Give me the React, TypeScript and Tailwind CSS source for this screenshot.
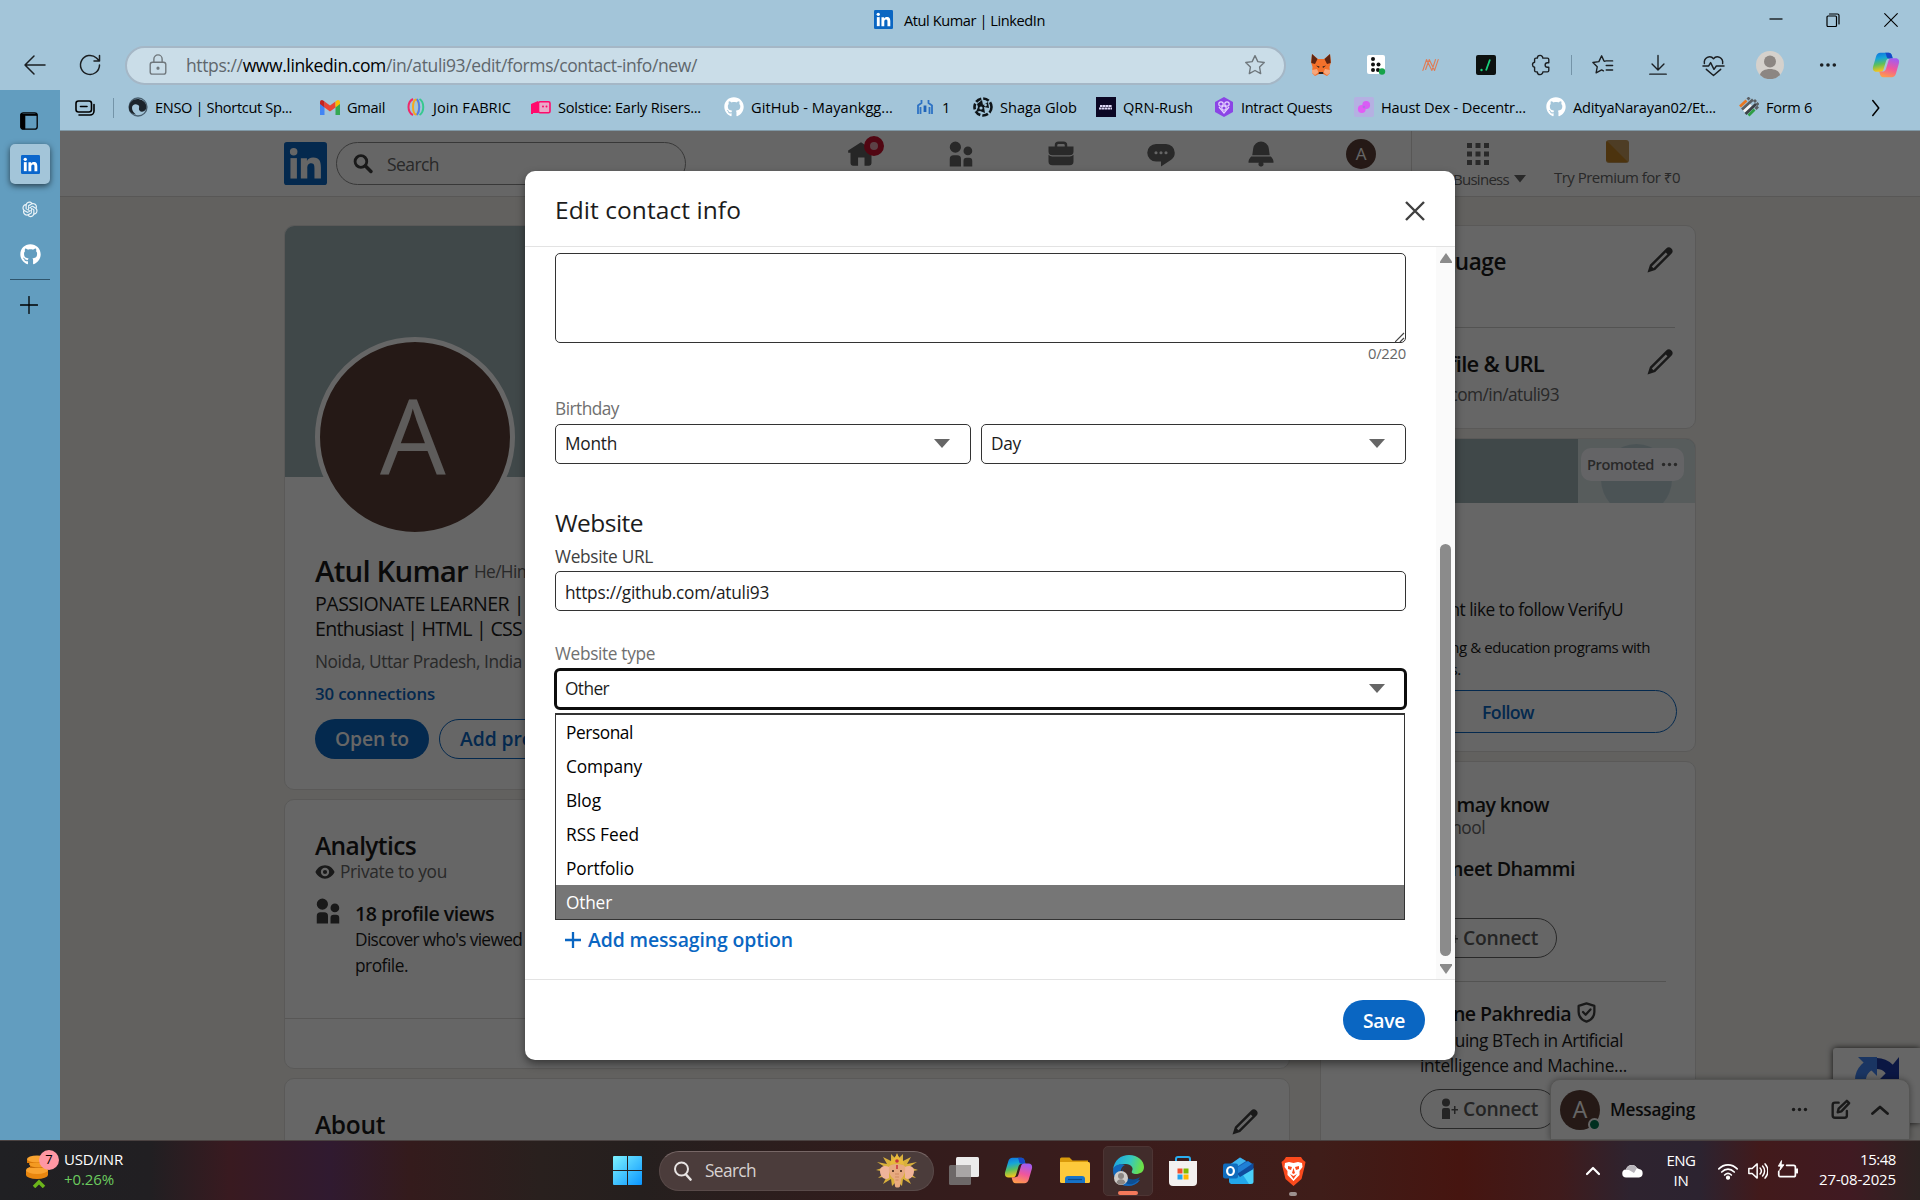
import React, { useLayoutEffect, useRef, useState } from "react";
import { FaGithub } from "react-icons/fa";
import { AiOutlineOpenAI } from "react-icons/ai";

type Kids = { children?: React.ReactNode; className?: string };

/* Text set to a given measure: tracking is computed from the rendered width. */
function T({ w, children, className = "" }: Kids & { w?: number }) {
  const ref = useRef<HTMLSpanElement>(null);
  const [ls, setLs] = useState(0);
  useLayoutEffect(() => {
    const el = ref.current;
    if (!el || !w) return;
    const n = (el.textContent || "").length;
    setLs((w - el.getBoundingClientRect().width) / n);
  }, [w]);
  return (
    <span ref={ref} className={`inline-block shrink-0 whitespace-nowrap ${className}`} style={ls ? { letterSpacing: ls } : undefined}>
      {children}
    </span>
  );
}

const Svg = ({ s = 24, vb = "0 0 24 24", className = "", children }: Kids & { s?: number; vb?: string }) => (
  <svg width={s} height={s} viewBox={vb} className={`shrink-0 ${className}`} fill="none" stroke="currentColor" strokeWidth="1.5" strokeLinecap="round" strokeLinejoin="round">
    {children}
  </svg>
);

const InLogo = ({ s, bg = "#0a66c2" }: { s: number; bg?: string }) => (
  <svg width={s} height={s} viewBox="0 0 24 24" className="shrink-0">
    <rect width="24" height="24" rx="1.6" fill={bg} />
    <g fill="#fff">
      <circle cx="5.4" cy="5.5" r="2.1" />
      <rect x="3.6" y="9" width="3.6" height="11.4" />
      <path d="M9.4 9h3.4v1.6c.5-1 1.700-1.900 3.500-1.900 3.600 0 4.300 2.400 4.300 5.500v6.200H17v-5.500c0-1.300 0-3-1.800-3s-2.200 1.400-2.200 2.900v5.600H9.400z" />
    </g>
  </svg>
);

const Pencil = () => (
  <svg width="30" height="30" viewBox="0 0 24 24" fill="#404040" className="shrink-0">
    <path d="M21.130 2.860a3 3 0 0 0-4.170 0l-13 13L2 22l6.190-2L21.130 7a3 3 0 0 0 0-4.160zM6.770 18.570l-1.350-1.350L16.640 6 18 7.350z" />
  </svg>
);

const People = ({ s }: { s: number }) => (
  <svg width={s} height={s} viewBox="0 0 24 24" fill="currentColor" className="shrink-0">
    <path d="M12 16v6H3v-6a3 3 0 0 1 3-3h3a3 3 0 0 1 3 3zm5.500-3A3.500 3.500 0 1 0 14 9.500a3.500 3.500 0 0 0 3.500 3.500zm1 2h-2a2.500 2.500 0 0 0-2.500 2.500V22h7v-4.500a2.500 2.500 0 0 0-2.500-2.500zM7.500 2A4.500 4.500 0 1 0 12 6.500 4.490 4.490 0 0 0 7.500 2z" />
  </svg>
);

const Copilot = ({ s }: { s: number }) => (
  <svg width={s} height={s} viewBox="0 0 32 32" className="shrink-0">
    <defs>
      <linearGradient id="cpa" x1="0" y1="0" x2="0.2" y2="1">
        <stop offset="0" stopColor="#0f6fe0" />
        <stop offset=".35" stopColor="#16a5d8" />
        <stop offset=".65" stopColor="#5ebf5b" />
        <stop offset="1" stopColor="#f5c51c" />
      </linearGradient>
      <linearGradient id="cpb" x1=".6" y1="0" x2=".3" y2="1">
        <stop offset="0" stopColor="#a35cf0" />
        <stop offset=".5" stopColor="#f0569c" />
        <stop offset="1" stopColor="#ff9c4a" />
      </linearGradient>
    </defs>
    <path d="M9.500 2h9.500c2.500 0 3.300 1.500 4 4l.7 2.500h-4c-2 0-3 1-3.700 3.200l-2.700 9c-.6 2-1.600 3-3.600 3H5c-3.500 0-4.600-2.600-3.700-6L4.700 6c.8-2.600 2.300-4 4.800-4z" fill="url(#cpa)" />
    <path d="M15 2h4c2.500 0 3.300 1.500 4 4l.7 2.500h-4.500c-1.600 0-2.200-1-2.600-2.500C16.200 4.300 16 2.600 15 2z" fill="#1549c8" />
    <path d="M22.500 30H13c-2.500 0-3.300-1.500-4-4l-.7-2.500h4c2 0 3-1 3.700-3.200l2.700-9c.6-2 1.600-3 3.600-3H27c3.500 0 4.600 2.600 3.700 6L27.300 26c-.8 2.600-2.300 4-4.800 4z" fill="url(#cpb)" />
  </svg>
);

const Dots = ({ s = 20 }: { s?: number }) => (
  <svg width={s} height={s} viewBox="0 0 20 20" fill="currentColor" className="shrink-0">
    <circle cx="3" cy="10" r="2" /><circle cx="10" cy="10" r="2" /><circle cx="17" cy="10" r="2" />
  </svg>
);

const Caret = ({ className = "" }: { className?: string }) => (
  <svg width="16" height="9" viewBox="0 0 16 9" fill="currentColor" className={className}><path d="M0 0h16L8 9z" /></svg>
);

const Cell = ({ className = "", children }: Kids) => <div className={`flex shrink-0 items-center justify-center ${className}`}>{children}</div>;

/* ---------- browser chrome ---------- */

function TitleBar() {
  return (
    <div className="flex h-10 shrink-0 items-center text-black">
      <div className="flex w-[1747px] items-center gap-[11px] pl-[874px]">
        <InLogo s={19} />
        <T w={141} className="mt-px text-[14.600px]">Atul Kumar | LinkedIn</T>
      </div>
      <Cell className="w-[57px]"><Svg s={14} vb="0 0 14 14"><path d="M.5 6h13" strokeLinecap="butt" strokeWidth="1.200" /></Svg></Cell>
      <Cell className="w-[58px]"><Svg s={14} vb="0 0 14 14"><path d="M1 4a1 1 0 0 1 1-1h7.500a1 1 0 0 1 1 1v8.500a1 1 0 0 1-1 1H2a1 1 0 0 1-1-1zM3.500 1h8a1.500 1.500 0 0 1 1.500 1.500V11" strokeWidth="1.200" /></Svg></Cell>
      <Cell className="w-[58px]"><Svg s={14} vb="0 0 14 14"><path d="M.7.7l12.600 12.600M13.300.7L.7 13.300" strokeWidth="1.100" /></Svg></Cell>
    </div>
  );
}

function Toolbar() {
  return (
    <div className="flex h-[50px] shrink-0 items-center text-[#1b1f22]">
      <Cell className="w-[69px]"><Svg s={24}><path d="M22 12H2.500M11 3l-9 9 9 9" /></Svg></Cell>
      <Cell className="w-[42px]"><Svg s={24}><path d="M21.500 12A9.500 9.500 0 1 1 18.500 5L21 7.500M21.500 2.500V8H16" /></Svg></Cell>
      <div className="ml-[14px] flex h-[39px] w-[1161px] items-center rounded-full border-2 border-[#a5b7c6] bg-[#cadde8]">
        <div className="ml-[20px] flex w-[39px] items-center text-[#6f777c]">
          <Svg s={22}><rect x="3.500" y="9" width="17" height="13" rx="2.500" /><path d="M7.500 9V5.500a4.500 4.500 0 0 1 9 0V9" /><circle cx="12" cy="15.500" r="1" fill="currentColor" /></Svg>
        </div>
        <T w={511} className="text-[17.500px] text-[#5f676d]">https://<span className="text-black">www.linkedin.com</span>/in/atuli93/edit/forms/contact-info/new/</T>
        <div className="mr-[18px] ml-auto text-[#6f777c]">
          <Svg s={22}><path d="M12 1.800l3.100 6.500 7 1-5.100 5 1.200 7.100L12 18l-6.200 3.400L7 14.300l-5.100-5 7-1z" /></Svg>
        </div>
      </div>
      <Cell className="ml-[7px] w-[55px]">
        <svg width="20" height="22" viewBox="0 0 20 22">
          <path d="M1 0l6 5h6l6-5 1 8-1.500 5 .5 6-3 3-4-2H8l-4 2-3-3 .5-6L0 8z" fill="#f4712b" />
          <path d="M1 0l5.500 5L4 10 .3 9zM19 0l-5.500 5L16 10l3.700-1z" fill="#5e2512" />
          <path d="M1 16l5-1 1.500 3.500L4 21l-3-2zM19 16l-5-1-1.500 3.500L16 21l3-2z" fill="#f6a67b" />
          <path d="M5 11.500l3.500 1-.5 1.500zM15 11.500l-3.500 1 .5 1.500zM8 18h4l.5 2h-5z" fill="#30211b" />
        </svg>
      </Cell>
      <Cell className="w-[55px]">
        <svg width="20" height="20" viewBox="0 0 20 20">
          <rect x="1" width="18" height="19" rx="2" fill="#fff" />
          <g fill="#111"><circle cx="7" cy="4" r="2" /><circle cx="7" cy="9.500" r="2" /><circle cx="12.500" cy="9.500" r="2" /><circle cx="7" cy="15" r="2" /><circle cx="12" cy="15" r="2" /></g>
          <circle cx="16" cy="16.500" r="3.200" fill="#16a34a" />
        </svg>
      </Cell>
      <Cell className="w-[55px]"><Svg s={18} vb="0 0 20 20" className="text-[#de7d58]"><path d="M1 16L5 4l6 12 4-12M4 15L8 4l6 12 4-12" strokeWidth="1.300" /></Svg></Cell>
      <Cell className="w-[55px]">
        <svg width="20" height="20" viewBox="0 0 20 20"><rect width="20" height="20" rx="2" fill="#0c1110" /><path d="M14 4.500l-4 11" stroke="#19d37c" strokeWidth="1.800" /><circle cx="5.500" cy="15" r="1.200" fill="#19d37c" /></svg>
      </Cell>
      <Cell className="w-[55px]">
        <Svg s={22}><path d="M8 4.500a3 3 0 0 1 6 0h5a1.500 1.500 0 0 1 1.500 1.500v3.500H19a2.500 2.500 0 0 0 0 5h1.500V18a1.500 1.500 0 0 1-1.500 1.500h-5a3 3 0 0 1-6 0H6.500A1.500 1.500 0 0 1 5 18v-3.500a2.800 2.800 0 0 1 0-5.500V6a1.500 1.500 0 0 1 1.500-1.500z" /></Svg>
      </Cell>
      <div className="ml-[3px] h-5 w-px bg-[#7494a8]" />
      <Cell className="ml-[3px] w-[55px]">
        <Svg s={22}><path d="M15 7.500h7.500M15.500 12.500h7M15.500 17.500h7M13 7.500L10.500 2 7.500 8.300l-6.500 1L5.700 14l-1.200 6.500 6-3.200 2 1.100M13 7.500l1 .5" /></Svg>
      </Cell>
      <Cell className="w-[55px]"><Svg s={22}><path d="M12 1.500V17M5.500 11l6.500 6.500 6.500-6.500M3 22h18" /></Svg></Cell>
      <Cell className="w-[56px]">
        <Svg s={23}><path d="M2.500 10C1.500 4 8.500.5 12 5c3.500-4.500 10.500-1 9.500 5M1 12.500h6l2-3.500 3.500 7L15 12.500h8M4.500 16l7.500 6.500 7.500-6.500" /></Svg>
      </Cell>
      <Cell className="w-[58px]">
        <svg width="28" height="28" viewBox="0 0 28 28"><circle cx="14" cy="14" r="14" fill="#d5d1cc" /><circle cx="14" cy="10.500" r="6" fill="#8c8682" /><path d="M4 24c1-8 19-8 20 0a14 14 0 0 1-20 0z" fill="#8c8682" /></svg>
      </Cell>
      <Cell className="w-[57px]"><Dots s={18} /></Cell>
      <Cell className="w-[59px]"><Copilot s={28} /></Cell>
    </div>
  );
}

const Marks: Record<string, React.ReactNode> = {
  enso: <svg width="20" height="20" viewBox="0 0 20 20"><circle cx="10" cy="10" r="9" fill="none" stroke="#4a6070" strokeWidth="1.300" /><path d="M1 11C1 4 7 1 12 2.500c5 1 7.500 6 6 9.500-1.500 3-5 3.500-6.500 1.500s1-4-1.500-5.500S4 7.500 4 11c0 3 2 5 4 6.500C4 17 1 15 1 11z" fill="#1c242b" /></svg>,
  gmail: <svg width="20" height="15" viewBox="0 0 20 15"><path d="M0 2v13h4.500V6z" fill="#4285f4" /><path d="M20 2v13h-4.500V6z" fill="#34a853" /><path d="M4.500 1.500v6L10 11.500l5.500-4v-6L10 5.500z" fill="#ea4335" /><path d="M0 2.200C0 .2 2-.5 3.500.7l1 .8v6L0 4z" fill="#c5221f" /><path d="M20 2.200c0-2-2-2.700-3.500-1.500l-1 .8v6L20 4z" fill="#fbbc04" /></svg>,
  fabric: <svg width="18" height="18" viewBox="0 0 18 18" fill="none" strokeWidth="2"><path d="M6 1C0 4 0 14 6 17" stroke="#f0286a" /><ellipse cx="9" cy="9" rx="3" ry="7.500" stroke="#f6a81c" /><path d="M10 1c3 4 3 12 0 16" stroke="#4a7df0" /><path d="M12.500 1c5 3 5 13 0 16" stroke="#36c98f" /></svg>,
  solstice: <svg width="20" height="15" viewBox="0 0 20 15"><path d="M0 4l7-3v12H2v1H0z" fill="#ff0a6c" /><rect x="7.500" y="1.800" width="11.500" height="11" rx="1.500" fill="#e9a9c8" stroke="#ff0a6c" strokeWidth="1.600" /><circle cx="12" cy="6.500" r="1" fill="#ff0a6c" /><circle cx="15.500" cy="6.500" r="1" fill="#ff0a6c" /></svg>,
  github: <FaGithub size={20} color="#fff" />,
  one: <svg width="18" height="16" viewBox="0 0 18 16" fill="none" stroke="#2d72c4" strokeWidth="2.200"><path d="M2 15V6.500L5.500 4V1M16 15V6.500L12.500 4V1M4.500 15V8M13.500 15V8" strokeWidth="1.800" /><path d="M9 6.500v6.500" stroke="#1f63b8" strokeWidth="2.800" /></svg>,
  shaga: <svg width="20" height="20" viewBox="0 0 20 20"><circle cx="10" cy="10" r="8.500" fill="none" stroke="#0e1418" strokeWidth="2.600" strokeDasharray="6 2" /><path d="M4 7l5-4 1 5 5-3 1 6-5-1 1 6-5-2-4 1 2-5z" fill="#0e1418" /><circle cx="8" cy="11" r="1.600" fill="#a3c5d9" /><circle cx="12.500" cy="8" r="1.400" fill="#a3c5d9" /></svg>,
  qrn: <svg width="20" height="20" viewBox="0 0 20 20"><path fill="#0b0724" d="M0 0h20v20H0z" /><path d="M4 9h12M3 11.500h13" stroke="#ddd8f5" strokeWidth="2" strokeDasharray="2.500 .4" /></svg>,
  intract: <svg width="20" height="20" viewBox="0 0 20 20"><path d="M10 0l9 5v10l-9 5-9-5V5z" fill="#8b45e6" /><g fill="none" stroke="#e6d3ff" strokeWidth="1.200"><circle cx="7" cy="7" r="2.200" /><circle cx="13" cy="7" r="2.200" /><circle cx="10" cy="11" r="2.200" /><path d="M5 10l5 6 5-6" /></g></svg>,
  haust: <svg width="20" height="20" viewBox="0 0 20 20"><rect width="20" height="20" rx="2" fill="#b5b0e2" /><circle cx="7.800" cy="12" r="3.900" fill="#e25cf5" /><circle cx="12.200" cy="8" r="3.900" fill="#d95cf5" /><circle cx="10" cy="10" r="1.300" fill="#b070e0" /></svg>,
  form: <svg width="20" height="20" viewBox="0 0 20 20" strokeWidth="2.800"><path d="M1 9.500l6.500-6" stroke="#e87722" /><path d="M8.500 2.500l2-2M15 5l2-2M17.500 8l2-2" stroke="#5a5f63" /><path d="M3 12.500L14 2.500" stroke="#5a5f63" /><path d="M5 14.500l7-6.500" stroke="#f2f2f2" /><path d="M6.500 17L17 7" stroke="#3c4147" /><path d="M9.500 18.500l6-6" stroke="#2f9e44" /><path d="M16.500 12l2.500-2.500" stroke="#5a5f63" /></svg>,
};

const bookmarks = [
  { icon: "enso", label: "ENSO | Shortcut Sp...", tw: 137, cell: "w-[192px]" },
  { icon: "gmail", label: "Gmail", tw: 38, cell: "w-[86px]" },
  { icon: "fabric", label: "Join FABRIC", tw: 78, cell: "w-[125px]" },
  { icon: "solstice", label: "Solstice: Early Risers...", tw: 143, cell: "w-[193px]" },
  { icon: "github", label: "GitHub - Mayankgg...", tw: 142, cell: "w-[191px]" },
  { icon: "one", label: "1", tw: 8, cell: "w-[58px]" },
  { icon: "shaga", label: "Shaga Glob", tw: 77, cell: "w-[123px]" },
  { icon: "qrn", label: "QRN-Rush", tw: 70, cell: "w-[118px]" },
  { icon: "intract", label: "Intract Quests", tw: 91, cell: "w-[140px]" },
  { icon: "haust", label: "Haust Dex - Decentr...", tw: 145, cell: "w-[192px]" },
  { icon: "github", label: "AdityaNarayan02/Et...", tw: 143, cell: "w-[193px]" },
  { icon: "form", label: "Form 6", tw: 46, cell: "w-[127px]" },
];

function Bookmarks() {
  return (
    <div className="flex h-10 shrink-0 items-center bg-[#a3c5d9] pb-[5px] text-[14.600px] text-black">
      <Cell className="w-[50px]"><Svg s={20} vb="0 0 20 20"><rect x="1" y="3" width="15.500" height="11" rx="2.500" strokeWidth="1.600" /><path d="M5.500 8.500H12M4 17h11a4 4 0 0 0 4-4V6.500" strokeWidth="1.600" /></Svg></Cell>
      <div className="mr-[14px] ml-[3px] h-5 w-px bg-[#7494a8]" />
      {bookmarks.map((b) => (
        <div key={b.label} className={`flex shrink-0 items-center gap-[7px] ${b.cell}`}>
          <Cell className="w-5">{Marks[b.icon]}</Cell>
          <T w={b.tw}>{b.label}</T>
        </div>
      ))}
      <Svg s={18}><path d="M9 2l8 10-8 10" strokeWidth="2" /></Svg>
    </div>
  );
}

function VerticalTabs() {
  return (
    <div className="flex w-[60px] shrink-0 flex-col items-center bg-[#629dbf] text-black">
      <Cell className="mt-[21px] h-5 pr-[2px]">
        <Svg s={18} vb="0 0 18 18"><rect x=".8" y=".8" width="16.400" height="16.400" rx="2.500" strokeWidth="1.300" /><path d="M1 2h16v1.500H5V17H2.500L1 15.500z" fill="currentColor" strokeWidth=".6" /></Svg>
      </Cell>
      <div className="mt-[13px] flex h-10 w-10 items-center justify-center rounded-[5px] bg-[#a3c5d9] shadow-[0_2px_6px_rgba(0,0,0,0.6)]"><InLogo s={19} bg="#0a66cc" /></div>
      <Cell className="mt-[15px] h-5"><AiOutlineOpenAI size={20} color="#e9f2f7" /></Cell>
      <Cell className="mt-[25px] h-5"><FaGithub size={21} color="#fff" /></Cell>
      <div className="mt-[15px] h-px w-10 bg-[#2f556c]" />
      <Cell className="mt-[15px] h-[19px] pr-[2px]"><Svg s={18} vb="0 0 18 18"><path d="M9 .5v17M.5 9h17" strokeWidth="1.300" /></Svg></Cell>
    </div>
  );
}

/* ---------- profile page ---------- */

const navIcons = [
  <svg key="h" width="28" height="28" viewBox="0 0 24 24"><path d="M23 9v2h-2v9a2 2 0 0 1-2 2h-4v-7H9.500v7H5a2 2 0 0 1-2-2v-9H1V9l11-7z" fill="#5f5f5f" /></svg>,
  <People key="p" s={30} />,
  <svg key="b" width="30" height="30" viewBox="0 0 24 24" fill="currentColor"><path d="M17 6V5a3 3 0 0 0-3-3h-4a3 3 0 0 0-3 3v1H2v4a3 3 0 0 0 3 3h14a3 3 0 0 0 3-3V6zM9 5a1 1 0 0 1 1-1h4a1 1 0 0 1 1 1v1H9zm10 9a4 4 0 0 0 3-1.380V18a3 3 0 0 1-3 3H5a3 3 0 0 1-3-3v-5.380A4 4 0 0 0 5 14z" /></svg>,
  <svg key="m" width="30" height="30" viewBox="0 0 24 24" fill="currentColor"><path d="M16 4H8a7 7 0 0 0 0 14h4v4l8.160-5.390A6.780 6.780 0 0 0 23 11a7 7 0 0 0-7-7zm-8 8.250A1.250 1.250 0 1 1 9.250 11 1.250 1.250 0 0 1 8 12.250zm4 0A1.250 1.250 0 1 1 13.250 11 1.250 1.250 0 0 1 12 12.250zm4 0A1.250 1.250 0 1 1 17.250 11 1.250 1.250 0 0 1 16 12.250z" /></svg>,
  <svg key="n" width="30" height="30" viewBox="0 0 24 24" fill="currentColor"><path d="M22 19h-8.280a2 2 0 1 1-3.440 0H2v-1a4.520 4.520 0 0 1 1.170-2.830l1-1.170h15.700l1 1.170A4.420 4.420 0 0 1 22 18zM18.210 7.440A6.270 6.270 0 0 0 12 2a6.270 6.270 0 0 0-6.210 5.440L5 13h14z" /></svg>,
];

function NavBar() {
  return (
    <div className="flex h-[66px] shrink-0 border-b border-[#dcdad6] bg-white pl-56 text-[#666]">
      <div className="mt-[11px] h-[43px]"><InLogo s={43} /></div>
      <div className="mt-[11px] ml-[9px] flex h-[43px] w-[350px] items-center rounded-full border border-[#8c8c8c] pl-[16px]">
        <Svg s={20} className="text-[#404040]"><circle cx="9.500" cy="9" r="7" strokeWidth="3.400" /><path d="M15 14.500l6.500 6.500" strokeWidth="4.200" /></Svg>
        <T w={52} className="mt-px ml-[14px] text-[17.500px]">Search</T>
      </div>
      <div className="ml-[125px] flex">
        {navIcons.map((ic, i) => (
          <div key={i} className="relative flex h-[45px] w-[100px] items-center justify-center">
            {ic}
            {i === 0 && <div className="absolute top-[5px] left-[53px] h-5 w-5 rounded-full border-[6px] border-[#cb112d] bg-[#e6a5ae]" />}
          </div>
        ))}
        <Cell className="h-[45px] w-[100px]"><Cell className="h-[30px] w-[30px] rounded-full bg-[#5d4037] text-[17px] text-white">A</Cell></Cell>
      </div>
      <div className="flex w-[134px] flex-col items-center border-l border-[#dcdad6] pt-[11px] pr-[2px]">
        <svg width="24" height="24" viewBox="0 0 24 24" fill="currentColor"><path d="M1 1h5v5H1zM9.500 1h5v5h-5zM18 1h5v5h-5zM1 9.500h5v5H1zM9.500 9.500h5v5h-5zM18 9.500h5v5h-5zM1 18h5v5H1zM9.500 18h5v5h-5zM18 18h5v5h-5z" /></svg>
        <div className="mt-[3px] flex items-center gap-[5px] text-[15px] leading-5">
          <T w={80}>For Business</T>
          <svg width="12" height="8" viewBox="0 0 12 8" fill="currentColor"><path d="M0 0h12L6 7.500z" /></svg>
        </div>
      </div>
      <div className="flex w-[144px] flex-col items-center pt-[9px]">
        <svg width="23" height="23" viewBox="0 0 23 23"><rect width="23" height="23" rx="3" fill="#c39a5c" /><path d="M1 1l21 21H3a3 3 0 0 1-3-3V3a3 3 0 0 1 1-2z" fill="#bd8023" /></svg>
        <T w={126} className="mt-[4px] text-[15px] leading-5">Try Premium for ₹0</T>
      </div>
    </div>
  );
}

const Card = ({ className = "", children }: Kids) => <div className={`overflow-hidden rounded-[10px] border border-[#e0dfdc] bg-white ${className}`}>{children}</div>;

function LeftColumn() {
  return (
    <div className="flex w-[1006px] shrink-0 flex-col gap-[9px] text-[#1a1a1a]">
      <Card className="h-[565px] shrink-0">
        <div className="h-[251px] bg-[#a0b4b7]" />
        <div className="-mt-[140px] pl-[30px]">
          <Cell className="relative h-[200px] w-[200px] rounded-full border-[5px] border-white bg-[#5d4037] pr-1 pb-1 text-[104px] font-medium text-[#eae6e4]">A</Cell>
          <div className="mt-[14px] flex h-10 items-center gap-[6px]">
            <T w={153} className="text-[29.500px] font-semibold">Atul Kumar</T>
            <T w={58} className="mt-[1px] text-[17.300px] text-[#666]">He/Him</T>
          </div>
          <div className="flex flex-col items-start text-[19.600px] leading-[25px]">
            <div className="flex gap-[14px]"><T w={209}>PASSIONATE LEARNER |</T><T>Web</T></div>
            <div className="flex gap-[14px]"><T w={207}>Enthusiast | HTML | CSS</T><T>|</T></div>
          </div>
          <div className="mt-[8px] flex h-[25px] items-center"><T w={207} className="text-[17.300px] text-[#666]">Noida, Uttar Pradesh, India</T></div>
          <div className="mt-[7px] flex h-[25px] items-center"><T w={120} className="text-[16.800px] font-semibold text-[#0a66c2]">30 connections</T></div>
          <div className="mt-[13px] flex gap-[10px] text-[19.300px] font-semibold">
            <Cell className="h-10 w-[114px] rounded-full bg-[#0a66c2] pt-px text-white"><T w={74}>Open to</T></Cell>
            <div className="flex h-10 w-[215px] items-center rounded-full border border-[#0a66c2] pt-px pl-5 text-[#0a66c2]"><T w={174}>Add profile section</T></div>
          </div>
        </div>
      </Card>
      <Card className="h-[270px] shrink-0">
        <div className="h-[219px] border-b border-[#dcdad6] pt-[33px] pl-[30px]">
          <div className="flex h-[26px] items-center"><T w={101} className="text-[24.500px] font-semibold">Analytics</T></div>
          <div className="flex h-[26px] items-center gap-[5px] text-[#404040]">
            <svg width="20" height="20" viewBox="0 0 24 24" fill="currentColor"><path d="M12 4C7 4 2.700 7.300.5 12 2.700 16.700 7 20 12 20s9.300-3.300 11.500-8C21.300 7.300 17 4 12 4zm0 13a5 5 0 1 1 0-10 5 5 0 0 1 0 10zm0-2.500a2.500 2.500 0 1 0 0-5 2.500 2.500 0 0 0 0 5z" /></svg>
            <T w={107} className="text-[17.300px] text-[#666]">Private to you</T>
          </div>
          <div className="mt-[11px] flex gap-[12px]">
            <div className="flex w-7 justify-end text-[#404040]"><People s={30} /></div>
            <div className="flex flex-col items-start pt-[4px]">
              <T w={139} className="text-[19.600px] leading-[27px] font-semibold">18 profile views</T>
              <T w={205} className="text-[17.300px] leading-[26px]">Discover who's viewed your</T>
              <T w={53} className="text-[17.300px] leading-[25px]">profile.</T>
            </div>
          </div>
        </div>
      </Card>
      <Card className="h-40 shrink-0">
        <div className="flex justify-between pt-[28px] pr-[29px] pl-[30px]">
          <T w={70} className="text-[24.500px] leading-9 font-semibold">About</T>
          <Pencil />
        </div>
      </Card>
    </div>
  );
}

const ConnectButton = () => (
  <div className="flex h-10 w-[137px] shrink-0 items-center rounded-full border border-[#666] pl-5 text-[#5a5a5a]">
    <svg width="18" height="22" viewBox="0 0 18 22" fill="currentColor"><circle cx="5" cy="4.500" r="4" /><path d="M1 12a2 2 0 0 1 2-2h4a2 2 0 0 1 2 2v9H1zM13 8h1.500v3H17v1.500h-2.500V16H13v-3.500h-2.500V11H13z" /></svg>
    <T w={75} className="mt-px ml-[4px] text-[19.300px] font-semibold">Connect</T>
  </div>
);

const End = ({ className = "", children }: Kids) => <div className={`flex shrink-0 items-center justify-end ${className}`}>{children}</div>;

function RightColumn() {
  return (
    <div className="flex w-[376px] shrink-0 flex-col gap-[9px] text-[#1a1a1a]">
      <Card className="h-[204px] shrink-0 pr-5 pl-[23px]">
        <div className="flex h-[102px] items-start justify-between border-b border-[#d0cfcc] pt-[19px]">
          <End className="h-[34px] w-[162px]"><T className="text-[22.500px] font-semibold tracking-[-0.4px]">Profile language</T></End>
          <Pencil />
        </div>
        <div className="flex items-start justify-between pt-[19px]">
          <End className="h-[32px] w-[200px]"><T className="text-[22px] font-semibold tracking-[-0.75px]">Public profile &amp; URL</T></End>
          <Pencil />
        </div>
        <End className="h-8 w-[215px]"><T className="text-[17.300px] tracking-[-0.55px] text-[#666]">www.linkedin.com/in/atuli93</T></End>
      </Card>
      <Card className="h-[314px] shrink-0">
        <div className="flex h-[64px] bg-[#a0b4b7] pl-[257px]">
          <div className="relative h-full w-[118px] overflow-hidden bg-[#d9e5e7]">
            <div className="absolute top-[5px] left-[23px] h-[71px] w-[71px] rounded-full bg-[#bcd0d5]" />
            <div className="absolute top-[9px] left-[3px] flex h-[33px] w-[103px] items-center justify-center gap-[7px] rounded-[10px] bg-[#fafbff] text-[14.600px] font-semibold text-[#666]">
              <T w={67}>Promoted</T><Dots s={17} />
            </div>
          </div>
        </div>
        <End className="mt-[93px] h-7 w-[302px]"><T className="text-[17.300px] tracking-[-0.5px]">Atul, you might like to follow VerifyU</T></End>
        <End className="mt-[12px] h-[22px] w-[329px]"><T className="text-[15px] tracking-[-0.42px]">Online training &amp; education programs with</T></End>
        <End className="h-[22px] w-[140px]"><T className="text-[15px] tracking-[-0.3px]">top universities.</T></End>
        <Cell className="mt-[10px] ml-5 h-[43px] w-[336px] rounded-full border border-[#0a66c2] pt-px pr-[2px] text-[17.800px] font-semibold text-[#0a66c2]"><T w={52}>Follow</T></Cell>
      </Card>
      <Card className="h-[500px] shrink-0">
        <End className="mt-[31px] h-[24px] w-[228px]"><T className="text-[19.600px] font-semibold tracking-[-0.6px]">People you may know</T></End>
        <End className="-mt-px h-[24px] w-[164px]"><T className="text-[17.300px] tracking-[-0.5px] text-[#666]">From your school</T></End>
        <End className="mt-[16px] h-[26px] w-[254px]"><T className="text-[19.600px] font-semibold tracking-[-0.45px]">Gurmeet Dhammi</T></End>
        <div className="mt-[36px] pl-[99px]"><ConnectButton /></div>
        <div className="mt-[23px] ml-[99px] h-px w-[246px] bg-[#d0cfcc]" />
        <End className="mt-[18px] h-[28px] w-[276px] gap-[5px]">
          <T className="text-[19.600px] font-semibold tracking-[-0.55px]">Anne Pakhredia</T>
          <Svg s={21} className="-mt-1 text-[#404040]"><path d="M12 1.500l9 3v7c0 5-3.500 9-9 11-5.500-2-9-6-9-11v-7zM8 11.500l3 3 5.500-6" strokeWidth="2.600" /></Svg>
        </End>
        <div className="flex flex-col items-start pl-[99px] text-[17.300px] leading-[25px]">
          <T w={203}>Pursuing BTech in Artificial</T>
          <T w={207}>intelligence and Machine...</T>
        </div>
        <div className="mt-[11px] pl-[99px]"><ConnectButton /></div>
      </Card>
    </div>
  );
}

function MessagingBar() {
  return (
    <div className="absolute right-[10px] bottom-0 flex h-[61px] w-[360px] items-center rounded-t-[10px] border border-[#d5d4d1] bg-white pl-[9px] text-[#404040] shadow-[0_0_6px_rgba(0,0,0,0.35)]">
      <div className="relative h-10 w-10 shrink-0">
        <Cell className="h-10 w-10 rounded-full bg-[#5d4037] text-[23px] text-white">A</Cell>
        <div className="absolute right-[-1px] bottom-[-1px] h-[13px] w-[13px] rounded-full border-2 border-white bg-[#01754f]" />
      </div>
      <T w={85} className="ml-[10px] text-[17.200px] font-semibold text-[#1a1a1a]">Messaging</T>
      <div className="ml-[96px] flex items-center">
        <Dots s={17} />
        <Svg s={22} className="ml-[21px]"><path d="M10.500 4H6.500A2.500 2.500 0 0 0 4 6.500V18a2.500 2.500 0 0 0 2.500 2.500H17a2.500 2.500 0 0 0 2.500-2.500v-5M9.500 14.500l1-4 9-8.500 2.500 2.500-8.500 9z" strokeWidth="2.600" /></Svg>
        <Svg s={18} vb="0 0 18 18" className="ml-[20px]"><path d="M1.500 12.500L9 6l7.500 6.500" strokeWidth="2.800" /></Svg>
      </div>
    </div>
  );
}

function CaptchaBadge() {
  return (
    <div className="absolute right-0 bottom-[17px] flex h-[75px] w-[87px] flex-col items-center rounded-l-[3px] bg-white pt-2 shadow-[0_0_6px_rgba(0,0,0,0.8)]">
      <svg width="48" height="48" viewBox="0 0 48 48">
        <path d="M24 2A22 22 0 0 1 46 24H35a11 11 0 0 0-11-11z" fill="#1c3aa9" /><path d="M46 1v23H26l7-7z" fill="#1c3aa9" />
        <path d="M24 2A22 22 0 0 0 2 24h11a11 11 0 0 1 11-11z" fill="#4285f4" /><path d="M5 1h19v19l-6-6z" fill="#4285f4" />
      </svg>
    </div>
  );
}

/* ---------- dialog ---------- */

const Field = ({ className = "", children }: Kids) => <div className={`flex items-center rounded-[5px] border border-[#333] bg-white ${className}`}>{children}</div>;

const options = [
  { label: "Personal", w: 67 }, { label: "Company", w: 76 }, { label: "Blog", w: 35 },
  { label: "RSS Feed", w: 73 }, { label: "Portfolio", w: 68 }, { label: "Other", w: 46 },
];

function Dialog() {
  return (
    <div className="absolute top-[40px] left-[465px] flex h-[889px] w-[930px] flex-col rounded-[10px] bg-white text-[#1c1c1c] shadow-[0_4px_8px_rgba(0,0,0,0.45)]">
      <div className="flex h-[76px] shrink-0 items-center justify-between border-b border-[#e3e3e3] px-[30px]">
        <T w={186} className="mt-[3px] text-[24.500px] font-medium">Edit contact info</T>
        <Svg s={20} vb="0 0 20 20" className="mt-1 text-[#404040]"><path d="M1 1l18 18M19 1L1 19" strokeWidth="2.400" strokeLinecap="butt" /></Svg>
      </div>
      <div className="flex min-h-0 flex-1">
        <div className="relative w-[911px] pt-[6px] pl-[30px] text-[17.300px]">
          <div className="relative h-[90px] w-[851px] rounded-[5px] border border-[#333]">
            <svg width="10" height="10" viewBox="0 0 10 10" className="absolute right-0 bottom-0" stroke="#444" strokeWidth="1.200"><path d="M0 10L9 1M5 10l4-4" /></svg>
          </div>
          <div className="flex h-[21px] w-[851px] items-center justify-end text-[14.800px] leading-[21px] text-[#666]"><T w={38}>0/220</T></div>
          <div className="mt-[32px] flex h-[26px] items-center text-[#707070]"><T w={64}>Birthday</T></div>
          <div className="mt-[2px] flex gap-[10px]">
            <Field className="h-10 w-[416px] justify-between pr-[20px] pl-[9px]"><T w={52}>Month</T><Caret className="-mt-[2px] text-[#666]" /></Field>
            <Field className="h-10 w-[425px] justify-between pr-[20px] pl-[9px]"><T w={30}>Day</T><Caret className="-mt-[2px] text-[#666]" /></Field>
          </div>
          <div className="mt-[43px] flex h-[33px] items-center"><T w={88} className="text-[24.500px]">Website</T></div>
          <div className="mt-[4px] flex h-[26px] items-center text-[#404040]"><T w={98}>Website URL</T></div>
          <Field className="mt-px h-10 w-[851px] pl-[9px]"><T w={204} className="mt-[4px]">https://github.com/atuli93</T></Field>
          <div className="mt-[30px] flex h-[26px] items-center text-[#707070]"><T w={100}>Website type</T></div>
          <div className="-ml-[1px] mt-px flex h-[42px] w-[853px] items-center justify-between rounded-[6px] border-[3px] border-[#0d0d0d] pr-[19px] pl-[8px]">
            <T w={44}>Other</T><Caret className="-mt-px text-[#666]" />
          </div>
          <div className="absolute top-[466px] left-[30px] flex h-[207px] w-[850px] flex-col border border-t-2 border-[#333] bg-white text-black">
            {options.map((o) => (
              <div key={o.label} className={`flex h-[34px] items-center pl-[10px] ${o.label === "Other" ? "bg-[#767676] text-white" : ""}`}><T w={o.w} className="mt-px">{o.label}</T></div>
            ))}
          </div>
          <div className="mt-[214px] ml-[10px] flex h-8 items-center gap-[7px] font-semibold text-[#0a66c2]">
            <Svg s={16} vb="0 0 16 16"><path d="M8 0v16M0 8h16" strokeWidth="2.300" strokeLinecap="butt" /></Svg>
            <T w={205} className="text-[19.400px]">Add messaging option</T>
          </div>
        </div>
        <div className="flex w-[19px] flex-col items-center bg-[#fafafa] pt-[6px] pb-[5px] text-[#8b8b8b]">
          <svg width="12" height="10" viewBox="0 0 12 10" fill="currentColor"><path d="M6 0l6 8.500V10H0V8.500z" /></svg>
          <div className="mt-[281px] h-[412px] w-[11px] rounded-full bg-[#8b8b8b]" />
          <svg width="12" height="10" viewBox="0 0 12 10" fill="currentColor" className="mt-auto"><path d="M6 10l6-8.500V0H0v1.500z" /></svg>
        </div>
      </div>
      <div className="flex h-[81px] shrink-0 items-center justify-end border-t border-[#e3e3e3] pr-[30px]">
        <Cell className="h-10 w-[82px] rounded-full bg-[#0a66c2] pt-[3px] text-[19.300px] font-semibold text-white"><T w={42}>Save</T></Cell>
      </div>
    </div>
  );
}

/* ---------- taskbar ---------- */

const WinLogo = () => (
  <svg width="29" height="29" viewBox="0 0 29 29">
    <defs><linearGradient id="wl" x1="0" y1="0" x2="1" y2="1"><stop offset="0" stopColor="#7df3ff" /><stop offset="1" stopColor="#0a95ff" /></linearGradient></defs>
    <path d="M0 1a1 1 0 0 1 1-1h13v14H0zM15 0h13a1 1 0 0 1 1 1v13H15zM0 15h14v14H1a1 1 0 0 1-1-1zM15 15h14v13a1 1 0 0 1-1 1H15z" fill="url(#wl)" />
  </svg>
);

const Ganesha = () => (
  <svg width="42" height="36" viewBox="0 0 42 36">
    <path d="M21 0l2 5 4-4v7l8-4-4 7 10-2-8 5 9 3-9 2 7 6-9-2 4 8-8-5-1 7-3-3-2 4-2-4-3 3-1-7-8 5 4-8-9 2 7-6-9-2 9-3-8-5 10 2-4-7 8 4V1l4 4z" fill="#d9b03c" />
    <path d="M4 18c0-5 5-6 9-4v11c-5 3-9-2-9-7zM38 18c0-5-5-6-9-4v11c5 3 9-2 9-7z" fill="#f0b49a" />
    <path d="M13 14c0-4 16-4 16 0 1 6-2 10-4 12l-1 7c0 2-5 2-5 0l-1-7c-3-2-6-6-5-12z" fill="#e8aa80" />
    <path d="M14 12c0-6 4-5 7-11 3 6 7 5 7 11-4-2-10-2-14 0z" fill="#e8b93c" />
    <circle cx="21" cy="8" r="1.800" fill="#c6303e" /><circle cx="17" cy="18" r="1" fill="#3a1d12" /><circle cx="25" cy="18" r="1" fill="#3a1d12" />
    <path d="M21 12v4" stroke="#c6303e" strokeWidth="1.500" /><path d="M19 21h4M19 24h4M19.500 27h3" stroke="#c98258" strokeWidth=".8" />
  </svg>
);

function Taskbar() {
  return (
    <div className="flex h-[60px] shrink-0 items-center border-t border-[#4a4241] bg-[linear-gradient(90deg,#202023_0,#211f22_150px,#391a20_230px,#301a30_330px,#341b1c_410px,#29201e_540px,#251f1e_640px,#331c1c_900px,#3a1c1c_1100px,#3f1d19_1320px,#461510_1460px,#3f1b1c_1560px,#2e232f_1630px,#2c2330_1700px,#421a1b_1760px,#401a22_1850px,#2c2322_1920px)] text-white">
      <div className="relative flex w-[613px] items-center pl-[26px]">
        <svg width="25" height="38" viewBox="0 0 25 38" className="-mt-[3px]">
          <g fill="#e8860f"><ellipse cx="11" cy="25" rx="11" ry="4" /><path d="M0 20h22v5H0z" /></g>
          <ellipse cx="11" cy="20" rx="11" ry="4" fill="#f9a330" /><path d="M4 14h18v4H4z" fill="#c96d08" /><ellipse cx="13" cy="14" rx="10" ry="3.500" fill="#f39a22" />
          <path d="M1 9h20v4H1z" fill="#d97808" /><ellipse cx="11" cy="9" rx="10" ry="3.500" fill="#f9a330" />
          <path d="M8 37l5-5 5 5" fill="none" stroke="#6cb51b" strokeWidth="3.500" />
        </svg>
        <Cell className="absolute top-[-3px] left-[39px] h-5 w-5 rounded-full bg-[#ff97a3] text-[13px] text-black">7</Cell>
        <div className="-mt-[4px] ml-[13px] flex flex-col items-start text-[15px] leading-5"><T w={59}>USD/INR</T><T w={50} className="text-[#6ccb5f]">+0.26%</T></div>
      </div>
      <WinLogo />
      <div className="ml-[17px] flex h-10 w-[275px] items-center rounded-full border border-t-[#776766] border-r-[#594a49] border-b-[#594a49] border-l-[#594a49] bg-[#4b3c3b] pr-[15px] pl-[13px]">
        <Svg s={20} vb="0 0 20 20" className="text-[#e8e4e3]"><circle cx="8.500" cy="8" r="6.500" strokeWidth="2" /><path d="M13 13.500l4.500 5" strokeWidth="2.600" /></Svg>
        <T w={51} className="ml-[12px] text-[17.300px] text-[#d8d2d1]">Search</T>
        <div className="ml-auto"><Ganesha /></div>
      </div>
      <Cell className="ml-[4px] w-[52px]">
        <svg width="30" height="28" viewBox="0 0 30 28"><rect y="8" width="22" height="20" rx="1.500" fill="#6d6868" /><rect x="7" width="23" height="20" rx="1.500" fill="#ecebeb" /><path d="M7 8h15v12H7z" fill="#a9a6a6" /></svg>
      </Cell>
      <Cell className="w-[56px]"><Copilot s={29} /></Cell>
      <Cell className="w-[57px]">
        <svg width="30" height="27" viewBox="0 0 30 27"><path d="M0 2a1.500 1.500 0 0 1 1.500-1.500h8l3 3H28V10H0z" fill="#d99a0b" /><path d="M0 5h28.500A1.500 1.500 0 0 1 30 6.500v18a1.500 1.500 0 0 1-1.500 1.500h-27A1.500 1.500 0 0 1 0 24.500z" fill="#fdc93b" /><path d="M5 26v-4a3 3 0 0 1 3-3h14a3 3 0 0 1 3 3v4z" fill="#1673c9" /><path d="M8 22.500h14" stroke="#0a4a8a" strokeWidth="1.200" /></svg>
      </Cell>
      <div className="relative flex h-[50px] w-[50px] items-center justify-center rounded-[5px] border border-[#4d3534] bg-[#412c2b]">
        <svg width="31" height="31" viewBox="0 0 31 31">
          <defs><linearGradient id="eg" x1="0" y1="0" x2="1" y2=".2"><stop offset="0" stopColor="#1aa0e8" /><stop offset=".6" stopColor="#35c8c0" /><stop offset="1" stopColor="#6be04a" /></linearGradient></defs>
          <path d="M0 15C1 5 8 0 16 0c9 0 15 6 15 12 0 5-4 7-8 7-3 0-5-1-4-3 2-3-1-7-6-7C7 9 1 11 0 15z" fill="url(#eg)" />
          <path d="M0 15c1-5 7-7 12-5-4 2-5 6-4 10 2 6 8 8 14 6l5-1c-3 4-7 6-12 6C6 31 0 24 0 15z" fill="#1268bd" />
          <path d="M12 11c-3 3-3 9 2 12 4 2 9 2 13-1-3 6-7 8-12 7-6-2-9-12-3-18z" fill="#0c4f94" />
          <circle cx="8" cy="23" r="7" fill="#cfccc9" /><circle cx="8" cy="21" r="3" fill="#8c8784" /><path d="M3.500 27.500c1-4.500 8-4.500 9 0-3 3-6 3-9 0z" fill="#8c8784" />
        </svg>
        <div className="absolute bottom-0 left-[14px] h-1 w-5 rounded-full bg-[#f4795b]" />
      </div>
      <Cell className="w-[58px] pl-[2px]">
        <svg width="30" height="30" viewBox="0 0 30 30"><path d="M8 6V3a2 2 0 0 1 2-2h10a2 2 0 0 1 2 2v3" fill="none" stroke="#2aaef0" strokeWidth="2" /><path d="M1 5h28v21a4 4 0 0 1-4 4H5a4 4 0 0 1-4-4z" fill="#f3f1f0" /><path d="M9.500 12.500h5v5h-5z" fill="#f1502f" /><path d="M15.500 12.500h5v5h-5z" fill="#7fba00" /><path d="M9.500 18.500h5v5h-5z" fill="#22a4ee" /><path d="M15.500 18.500h5v5h-5z" fill="#ffb901" /></svg>
      </Cell>
      <Cell className="w-[54px]">
        <svg width="31" height="28" viewBox="0 0 31 28"><path d="M5 9L17 0.500l13 7.500v4L16 20z" fill="#1a62b5" /><path d="M5 9L17 .5l6 3.500L9 13z" fill="#3fb4ee" /><path d="M12 12l13-8 4.500 3L16 17z" fill="#1f7fd6" /><path d="M30.500 11v13.500a2.500 2.500 0 0 1-2.500 2.500H8l1-6z" fill="#49d0fa" /><path d="M6 20l14-2 6 9H9a3 3 0 0 1-3-3z" fill="#22a6ea" /><path d="M30.500 6v6L17 20l-3-3z" fill="#0f4c9e" /><rect y="6.500" width="15" height="15" rx="2" fill="#0f6cbd" /><ellipse cx="7.500" cy="14" rx="3.400" ry="4" fill="none" stroke="#fff" strokeWidth="2.200" /></svg>
      </Cell>
      <div className="relative flex h-[50px] w-[56px] items-center justify-center">
        <svg width="25" height="30" viewBox="0 0 25 30"><path d="M5 1h15l2 3 2.500 2-1 5-3 12-8 7-8-7-3-12-1-5L3 4z" fill="#fb4a1d" /><path d="M4 7l4-1 4.500 1L17 6l4 1 .5 4-3 4 0 4-6 6-6-6 0-4-3-4z" fill="#fff" /><path d="M7 10l4 1-1 3-3-1zM18 10l-4 1 1 3 3-1zM12.500 12l1.500 5-1.500 1-1.500-1zM9 18l3.500 2 3.500-2-3.500 5z" fill="#fb4a1d" /></svg>
        <div className="absolute bottom-0 left-[24px] h-1 w-2 rounded-full bg-[#9d918f]" />
      </div>
      <div className="ml-auto flex items-center">
        <Svg s={14} vb="0 0 14 14" className="mr-[-1px]"><path d="M1 10l6-6 6 6" strokeWidth="2.200" /></Svg>
        <svg width="21" height="14" viewBox="0 0 21 14" className="ml-[23px]"><path d="M4.500 13.500a4 4 0 0 1-.5-8A6 6 0 0 1 15 4l2 1a4.300 4.300 0 0 1 0 8.500z" fill="#fff" /><path d="M4 6A6 6 0 0 1 15 4l-3 5-5-3z" fill="#b8b5bb" /></svg>
        <div className="-mt-[2px] ml-[23px] flex w-[30px] flex-col items-center text-[15px] leading-5"><T w={29}>ENG</T><T w={15}>IN</T></div>
        <Svg s={20} className="ml-[22px]"><path d="M1 9.500c6-6.500 16-6.500 22 0M4.500 13.200c4.500-4.500 10.500-4.500 15 0M8 16.800c2.500-2.300 5.500-2.300 8 0" strokeWidth="2" /><circle cx="12" cy="20" r="1.800" fill="currentColor" /></Svg>
        <Svg s={20} className="ml-[10px]"><path d="M1 9h4l6-5.500v17L5 15H1zM14.500 8.500c1.800 2 1.800 5 0 7M17.500 6c3.200 3.500 3.200 8.500 0 12M20.500 3.500c4.500 5 4.500 12 0 17" strokeWidth="1.800" /></Svg>
        <Svg s={21} className="ml-[9px]"><path d="M11 6h8a2 2 0 0 1 2 2v9a2 2 0 0 1-2 2H4a2 2 0 0 1-2-2v-4M23 10.500v4" strokeWidth="2" /><path d="M5 1L1.500 7h3L3 12l5-6.500H5z" fill="currentColor" strokeWidth="1" /></Svg>
        <div className="-mt-[4px] mr-[24px] ml-[21px] flex flex-col items-end text-[15px] leading-5"><T w={36}>15:48</T><T w={77}>27-08-2025</T></div>
      </div>
    </div>
  );
}

export default function App() {
  return (
    <div className="flex h-[1200px] w-[1920px] flex-col overflow-hidden bg-[#a3c5d9] font-['Open_Sans','Noto_Sans',sans-serif]">
      <TitleBar />
      <Toolbar />
      <div className="flex min-h-0 flex-1">
        <VerticalTabs />
        <div className="flex min-w-0 flex-1 flex-col">
          <Bookmarks />
          <div className="relative flex min-h-0 flex-1 flex-col overflow-hidden border-t border-[#7f98a6] bg-[#f4f2ee]">
            <NavBar />
            <div className="flex min-h-0 flex-1 gap-[30px] overflow-hidden pt-[28px] pl-[224px]">
              <LeftColumn />
              <RightColumn />
            </div>
            <CaptchaBadge />
            <MessagingBar />
            <div className="absolute inset-0 bg-black/60" />
            <Dialog />
          </div>
        </div>
      </div>
      <Taskbar />
    </div>
  );
}
